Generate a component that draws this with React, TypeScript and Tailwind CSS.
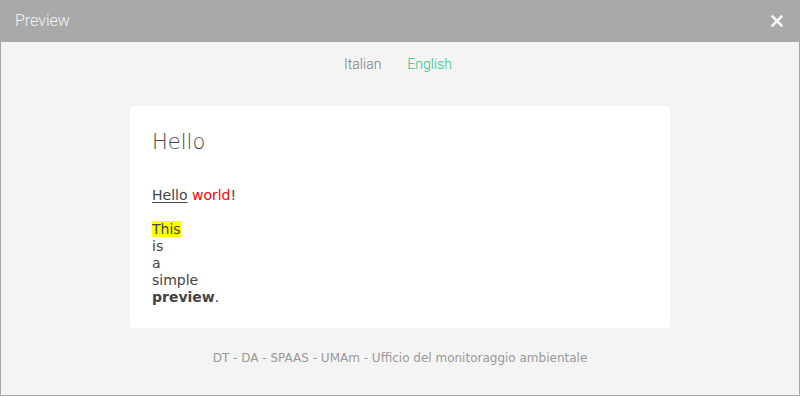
import React from "react";

export default function App() {
  return (
    <div className="w-[800px] h-[396px] flex flex-col bg-[#f4f4f4]" style={{ fontFamily: "'DejaVu Sans', sans-serif" }}>
      <div className="h-[42px] shrink-0 bg-[#a9a9a9] flex items-center justify-between pl-[15px] pr-[16px]">
        <span className="text-[16px] font-light text-[#f5f5f5]" style={{ fontFamily: "Roboto, sans-serif" }}>Preview</span>
        <svg width="12" height="12" viewBox="0 0 12 12" className="mr-[1px]">
          <path d="M1.5 1.5 L10.5 10.5 M10.5 1.5 L1.5 10.5" stroke="#f7f7f7" strokeWidth="2.6" strokeLinecap="square" />
        </svg>
      </div>
      <div className="flex-1 flex flex-col items-center border-x border-b border-[#a9a9a9]">
        <div className="mt-[12px] ml-[-4px] flex gap-[26px] text-[14px] leading-[20px] font-light" style={{ fontFamily: "Roboto, sans-serif" }}>
          <span className="text-[#7a7a7a]">Italian</span>
          <span className="text-[#1fc78a]">English</span>
        </div>
        <div className="mt-[32px] w-[540px] bg-white rounded-[3px] p-[22px] text-[#444] text-[14px] leading-[17px]">
          <h2 className="mt-[2px] text-[21px] leading-[24px] font-extralight text-[#444]">Hello</h2>
          <p className="mt-[33px]">
            <span className="underline underline-offset-2">Hello</span> <span className="text-[#ff0000]">world</span>!
          </p>
          <p className="mt-[17px]">
            <span className="bg-[#ffff00]">This</span>
            <br />is
            <br />a
            <br />simple
            <br />
            <b className="font-bold">preview</b>.
          </p>
        </div>
        <div className="mt-[23px] text-[12px] leading-[14px] text-[#999]">
          DT - DA - SPAAS - UMAm - Ufficio del monitoraggio ambientale
        </div>
      </div>
    </div>
  );
}
